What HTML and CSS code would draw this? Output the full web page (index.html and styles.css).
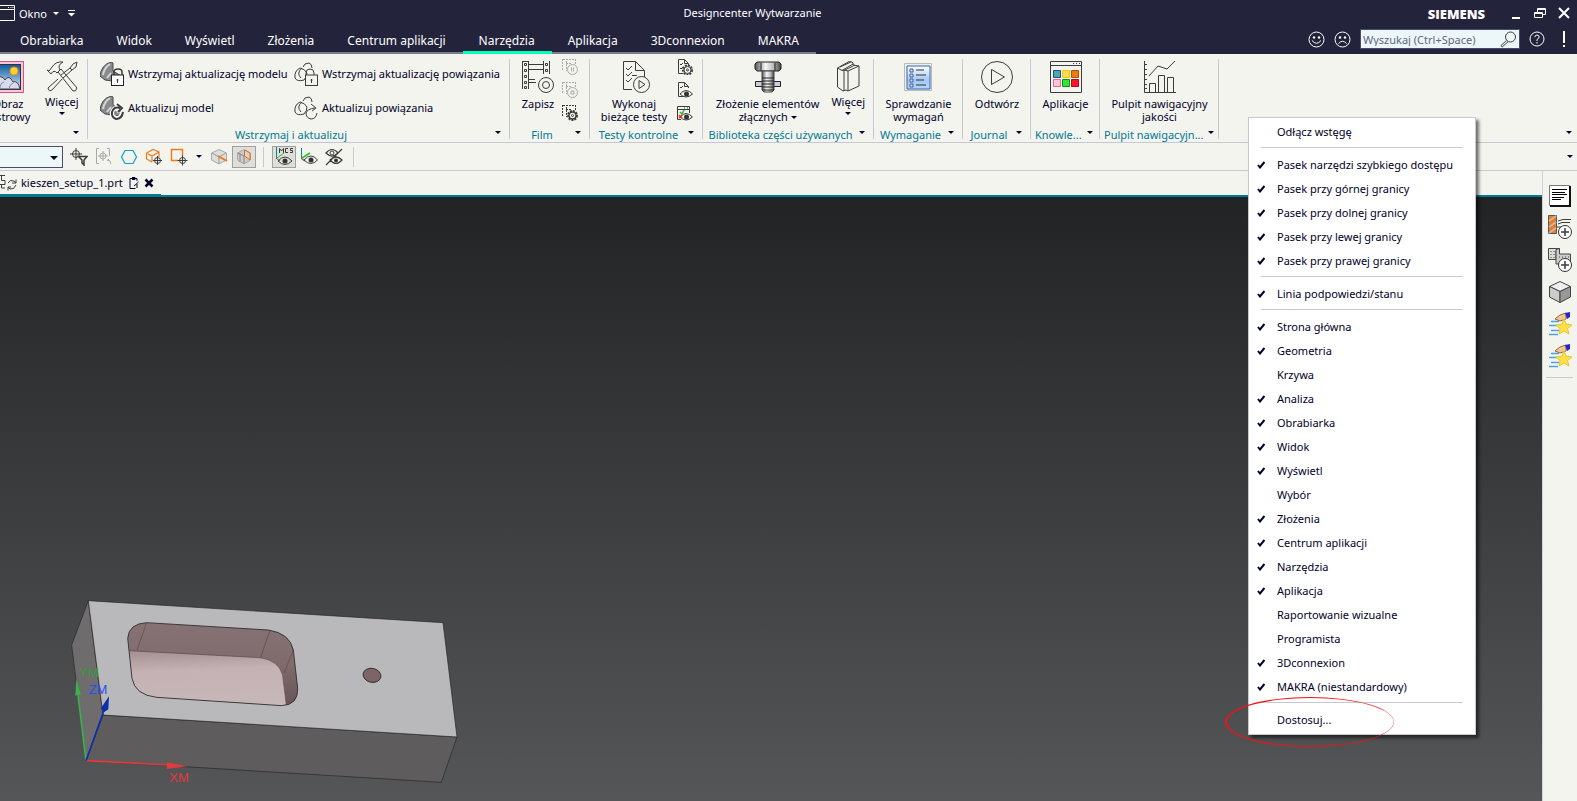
FILE: index.html
```html
<!DOCTYPE html>
<html lang="pl">
<head>
<meta charset="utf-8">
<title>Designcenter Wytwarzanie</title>
<link rel="stylesheet" href="styles.css">
</head>
<body>
<div class="app">
  <header class="titlebar">
    <div class="quick">
      <button class="window-menu"><svg width="16" height="16" viewBox="0 0 16 16"><path d="M-4 .5H14.500V15.500H-4M-4 4.500H14" class="w"/><path d="M8 2.500h1M10.500 2.500h1M12.500 2.500h1" class="w"/></svg><span>Okno</span><i class="caret"></i></button>
      <button class="customize" aria-label="Dostosuj pasek"><svg width="7" height="7" viewBox="0 0 7 7"><path d="M0 .5H7" class="w"/><path d="M0 3h7L3.500 6.500z" fill="#fff"/></svg></button>
    </div>
    <h1>Designcenter Wytwarzanie</h1>
    <div class="window-side">
      <strong class="brand">SIEMENS</strong>
      <button class="win" aria-label="Minimalizuj"><svg width="14" height="14"><path d="M3 12h8" class="w w2"/></svg></button>
      <button class="win" aria-label="Przywróć"><svg width="14" height="14"><path d="M4.500 6V2.500h8v6H10M4 3.500h9M1.500 6.500h8v5h-8zM1 7.500h9" class="w"/></svg></button>
      <button class="win" aria-label="Zamknij"><svg width="14" height="14"><path d="M2 2L12 12M12 2L2 12" class="w w2"/></svg></button>
    </div>
  </header>
  <div class="menubar">
    <nav class="tabs">
      <button>Obrabiarka</button><button>Widok</button><button>Wyświetl</button><button>Złożenia</button><button>Centrum aplikacji</button><button class="active">Narzędzia</button><button>Aplikacja</button><button>3Dconnexion</button><button>MAKRA</button>
    </nav>
    <div class="helpers">
      <button class="face" aria-label="Zadowolony"><svg width="17" height="17"><circle cx="8.500" cy="8.500" r="7.500" class="w"/><circle cx="6" cy="6.500" r="1.200" fill="#fff"/><circle cx="11" cy="6.500" r="1.200" fill="#fff"/><path d="M4 9.500Q8.500 15 13 9.500" class="w"/></svg></button>
      <button class="face" aria-label="Niezadowolony"><svg width="17" height="17"><circle cx="8.500" cy="8.500" r="7.500" class="w"/><circle cx="6" cy="6.500" r="1.200" fill="#fff"/><circle cx="11" cy="6.500" r="1.200" fill="#fff"/><path d="M4.500 12.500Q8.500 8 12.500 12.500" class="w"/></svg></button>
      <label class="search"><input type="text" aria-label="Wyszukaj" placeholder="Wyszukaj (Ctrl+Space)"><svg width="17" height="17" viewBox="0 0 17 17"><circle cx="10.500" cy="6" r="5" class="k"/><path d="M6.500 9.500L1 14.500l1.200 1.500L8 10.800" class="k"/></svg></label>
      <button class="help" aria-label="Pomoc"><svg width="16" height="16"><circle cx="8" cy="8" r="7" class="w"/><path d="M5.800 6.200Q6 4 8 4T10.200 6Q10.200 7.200 8 8.600V10M8 11v1.500" class="w"/></svg></button>
      <button class="alert" aria-label="Alerty"><svg width="8" height="18"><path d="M4 1v12M4 15v2" class="w w2"/></svg></button>
    </div>
  </div>

  <section class="ribbon">
    <div class="group">
      <div class="body first">
        <button class="big raster"><svg width="32" height="32" viewBox="0 0 32 32"><defs><linearGradient id="sky" x2="0" y2="1"><stop stop-color="#0b5a9e"/><stop offset="1" stop-color="#d8eefb"/></linearGradient></defs><rect x=".5" y=".5" width="31" height="31" fill="#f7c6d8" stroke="#d0558a"/><rect x="3.500" y="3.500" width="25" height="25" fill="url(#sky)" stroke="#333"/><circle cx="22" cy="10" r="4" fill="#ffd42e" stroke="#ff8b17"/><path d="M4 28V18q5-5 9 1q4-6 8 2q5-2 7 7z" fill="#dadaee" stroke="#444"/><path d="M8 28q0-6 4-7M17 28q0-4 4-6" stroke="#8886a8" fill="none"/></svg><span>Obraz<br>rastrowy</span></button>
        <button class="big more"><svg width="32" height="32" viewBox="0 0 32 32"><path d="M3 10L6 6Q10 0 17 1Q11 4 14 9L11 12Q8 8 5 13L1 9ZM12 11L15 8L31 27Q30 31 27 30ZM27 3L31 1L30 6L26 9L17 17M26 9L24 7L15 14M16 18L7 28Q3 32 2 27L12 18M27 3L24 7" class="k"/></svg><span>Więcej</span><i class="caret"></i></button>
      </div>
      <div class="foot"><span></span><button aria-label="Opcje grupy"><i class="caret"></i></button></div>
    </div>
    <div class="group">
      <div class="body pairs">
        <button class="row"><svg width="24" height="24" viewBox="0 0 24 24"><path d="M11 0L13 1V9L23 15L19 20L5 18L0 14Q1 3 11 0Z" fill="#888b8d" stroke="#494a4c"/><path d="M3 13Q4 6 10 2M7 16L11 11" fill="none" stroke="#d7d7d7" stroke-width="2"/><path d="M14 13V10q0-3 4-3t4 3v3" class="k" stroke-width="1.500"/><rect x="11.500" y="13" width="12" height="10.500" fill="#fff" stroke="#222"/><path d="M17.500 17v4M16.500 18h2" class="k"/></svg><span>Wstrzymaj aktualizację modelu</span></button>
        <button class="row"><svg width="24" height="24" viewBox="0 0 24 24"><path d="M12 13V11q0-4 4-4t4 4v2M1 16Q0 9 6 6Q11 7 13 11Q13 15 10 18Q3 20 1 16M7 16Q2 11 8 6M9 5Q10 1 15 1Q18 2 18 6" class="k"/><rect x="11.500" y="13" width="12" height="10.500" class="bg"/><path d="M17.500 17v4M16.500 18h2" class="k"/></svg><span>Wstrzymaj aktualizację powiązania</span></button>
        <button class="row"><svg width="24" height="24" viewBox="0 0 24 24"><path d="M11 0L13 1V9L21 14L19 20L5 18L0 14Q1 3 11 0Z" fill="#888b8d" stroke="#494a4c"/><path d="M3 13Q4 6 10 2M7 16L11 11" fill="none" stroke="#d7d7d7" stroke-width="2"/><path d="M22 16Q21 23 16 22Q11 20 12 16Q14 11 20 12M17 7L22 12L17 16" fill="none" stroke="#fff" stroke-width="4"/><path d="M23 16Q22 23 16 23Q11 21 12 16Q14 10 20 12M17 8L22 12L18 16" class="k" stroke-width="2"/></svg><span>Aktualizuj model</span></button>
        <button class="row"><svg width="24" height="24" viewBox="0 0 24 24"><path d="M1 16Q0 9 6 6Q11 7 13 11Q13 15 10 18Q3 20 1 16M7 16Q2 11 8 6M9 5Q10 1 15 1Q18 2 18 6M23 17Q22 23 17 23Q12 22 12 17Q13 13 21 12M17 8L22 12L18 15" class="k"/></svg><span>Aktualizuj powiązania</span></button>
      </div>
      <div class="foot"><span>Wstrzymaj i aktualizuj</span><button aria-label="Opcje grupy"><i class="caret"></i></button></div>
    </div>
    <div class="group">
      <div class="body film">
        <button class="big"><svg width="32" height="32" viewBox="0 0 32 32"><path d="M.5 0V28M6.500 0V28M.5 .5H6.500M21.500 0V13M27.500 0V13M7 3.500H21M7 8.500H21M7 21.500H14M7 18.500H13" class="k"/><path d="M2.500 2.500h2v2h-2zM2.500 8.500h2v2h-2zM2.500 14.500h2v2h-2zM2.500 20.500h2v2h-2zM2.500 25.500h2v2h-2zM23.500 2.500h2v2h-2zM23.500 8.500h2v2h-2z" class="k"/><circle cx="24" cy="24" r="7.500" class="bg"/><circle cx="24" cy="24" r="3.500" class="k"/></svg><span>Zapisz</span></button>
        <div class="stack">
          <button disabled aria-label="Wstrzymaj"><svg width="16" height="16"><path d="M.5 0V12M4.500 2V12M4 4.500H10M13.500 0V6M1 .5H14" class="k" stroke-dasharray="2 1"/><circle cx="10.500" cy="10.500" r="5" class="bg"/><path d="M9.500 8.500v4M11.500 8.500v4" class="k"/></svg></button>
          <button disabled aria-label="Zatrzymaj"><svg width="16" height="16"><path d="M.5 0V12M4.500 2V12M4 4.500H10M13.500 0V6M1 .5H14" class="k" stroke-dasharray="2 1"/><circle cx="10.500" cy="10.500" r="5" class="bg"/><path d="M9 9h3v3h-3z" class="k"/></svg></button>
          <button aria-label="Ustawienia filmu"><svg width="16" height="16"><path d="M.5 0V12M4.500 2V12M4 4.500H10M13.500 0V6M1 .5H14" class="k" stroke-dasharray="2 1"/><circle cx="10.500" cy="10.500" r="4.500" class="bg" stroke-width="2" stroke-dasharray="2 1"/><circle cx="10.500" cy="10.500" r="3.500" class="bg" stroke-width="1.500"/><circle cx="10.500" cy="10.500" r="1" class="k"/></svg></button>
        </div>
      </div>
      <div class="foot"><span>Film</span><button aria-label="Opcje grupy"><i class="caret"></i></button></div>
    </div>
    <div class="group">
      <div class="body tests">
        <button class="big"><svg width="32" height="32" viewBox="0 0 32 32"><path d="M14 28.500H5.500V.5H17.500L26.500 9.500V16M17.500 .5V9.500H26M8 7l2 2 4-4M8 13l2 2 4-4M8 19l2 2 4-4M14 14.500h5" class="k"/><circle cx="23.500" cy="23.500" r="8" class="bg"/><path d="M21 19.500V27.500L27 23.500Z" class="k"/></svg><span>Wykonaj<br>bieżące testy</span></button>
        <div class="stack">
          <button aria-label="Ustawienia testów"><svg width="16" height="16"><path d="M6 14.500H1.500V.5H7.500L11.500 4.500V6M7.500 .5V4.500H11M3 5l1 1 2-2M3 9l1 1 2-2" class="k"/><circle cx="10.500" cy="11" r="4.500" class="bg" stroke-width="2" stroke-dasharray="2 1"/><circle cx="10.500" cy="11" r="3.500" class="bg"/><circle cx="10.500" cy="11" r="1" class="k"/></svg></button>
          <button aria-label="Podgląd testów"><svg width="16" height="16"><path d="M6 14.500H1.500V.5H7.500L11.500 4.500V6M7.500 .5V4.500H11M3 5l1 1 2-2" class="k"/><path d="M3 12Q9 5 15.500 12Q9 18 3 12Z" class="bg"/><circle cx="9.500" cy="12" r="2.500" fill="#333"/></svg></button>
          <button aria-label="Wyniki testów"><svg width="16" height="16"><path d="M4 14.500H.5V1.500H12.500V8M1 4.500H12M7 3h1M10 3h1" class="k"/><path d="M3 12Q9 5 15.500 12Q9 18 3 12Z" class="bg"/><circle cx="9.500" cy="12" r="2.500" fill="#333"/><path d="M3 7l2 2 2-4" fill="none" stroke="#22c32e" stroke-width="1.500"/><path d="M2 10l3 3M5 10l-3 3" stroke="#e8262e" stroke-width="1.500"/></svg></button>
        </div>
      </div>
      <div class="foot"><span>Testy kontrolne</span><button aria-label="Opcje grupy"><i class="caret"></i></button></div>
    </div>
    <div class="group">
      <div class="body library">
        <button class="big"><svg width="32" height="32" viewBox="0 0 32 32"><defs><linearGradient id="steel"><stop stop-color="#555"/><stop offset=".4" stop-color="#f7f7f7"/><stop offset=".7" stop-color="#bbb"/><stop offset="1" stop-color="#444"/></linearGradient></defs><path d="M3 3L5 1H27L29 3V8L27 10H5L3 8Z" fill="url(#steel)" stroke="#222"/><path d="M9 2V10M23 2V10" stroke="#222"/><path d="M3.500 20.500h25v5h-25z" fill="#ccd" stroke="#222"/><path d="M10 10H22V29L20 31H12L10 29Z" fill="url(#steel)" stroke="#444"/><path d="M10 17h12M10 20h12M10 23h12M10 26h12M10 29h12" stroke="#222"/></svg><span>Złożenie elementów<br>złącznych <i class="caret"></i></span></button>
        <button class="big more"><svg width="32" height="32" viewBox="0 0 32 32"><path d="M5.500 7L18 0L21 2V4L27 5V25L16 30L14 29L11 30L5.500 26ZM5.500 7L10 9.500L12 9V30M16 30V10L27 5M10 9.500L21 3M12 9L16 10M13 9L23 4M8 6L19 1" class="k"/></svg><span>Więcej</span><i class="caret"></i></button>
      </div>
      <div class="foot"><span>Biblioteka części używanych</span><button aria-label="Opcje grupy"><i class="caret"></i></button></div>
    </div>
    <div class="group">
      <div class="body">
        <button class="big"><svg width="32" height="32" viewBox="0 0 32 32"><defs><linearGradient id="list" x2="0" y2="1"><stop stop-color="#fff"/><stop offset=".6" stop-color="#a4c8f6"/><stop offset="1" stop-color="#b5d5ff"/></linearGradient></defs><path d="M2.500 2.500h27v27h-27z" fill="#eee" stroke="#bcbbb0"/><path d="M5 5h23v23h-23z" fill="url(#list)" stroke="#3565b3"/><path d="M8 8h3v3h-3zM8 13h3v3h-3zM8 18h3v3h-3zM8 23h3v3h-3z" fill="#fbdf9f" stroke="#3565b3"/><path d="M14 9h8M14 14h10M14 19h8M14 24h10" stroke="#333"/></svg><span>Sprawdzanie<br>wymagań</span></button>
      </div>
      <div class="foot"><span>Wymaganie</span><button aria-label="Opcje grupy"><i class="caret"></i></button></div>
    </div>
    <div class="group">
      <div class="body">
        <button class="big"><svg width="32" height="32" viewBox="0 0 32 32"><circle cx="16" cy="16" r="15.500" class="k"/><path d="M10.500 8.500V23.500L23.500 16Z" class="k"/></svg><span>Odtwórz</span></button>
      </div>
      <div class="foot"><span>Journal</span><button aria-label="Opcje grupy"><i class="caret"></i></button></div>
    </div>
    <div class="group">
      <div class="body">
        <button class="big"><svg width="32" height="32" viewBox="0 0 32 32"><path d="M.5 .5h31v31h-31zM0 4.500h32M23 2.500h1M26 2.500h1M29 2.500h1" class="k"/><path d="M3.500 9.500h7v7h-7z" fill="#5b9fb8" stroke="#00607d"/><path d="M12.500 9.500h7v7h-7z" fill="#ffdc60" stroke="#ffc000"/><path d="M21.500 9.500h7v7h-7z" fill="#ec7a0c" stroke="#a95708"/><path d="M3.500 18.500h7v7h-7z" fill="#f8c6da" stroke="#dd6797"/><path d="M12.500 18.500h7v7h-7z" fill="#2ee838" stroke="#118c18"/><path d="M21.500 18.500h7v7h-7z" fill="#ff142e" stroke="#b8051b"/></svg><span>Aplikacje</span></button>
      </div>
      <div class="foot"><span>Knowle...</span><button aria-label="Opcje grupy"><i class="caret"></i></button></div>
    </div>
    <div class="group">
      <div class="body">
        <button class="big"><svg width="32" height="32" viewBox="0 0 32 32"><path d="M.5 0V31.500H32M1 3.500h2M1 8.500h2M1 13.500h2M1 18.500h2M1 23.500h2M1 27.500h2M5.500 31V22.500H11.500V31M14.500 31V14.500H20.500V31M23.500 31V16.500H29.500V31M5 15L14 5L23 8L31 0" class="k"/></svg><span>Pulpit nawigacyjny<br>jakości</span></button>
      </div>
      <div class="foot"><span>Pulpit nawigacyjn...</span><button aria-label="Opcje grupy"><i class="caret"></i></button></div>
    </div>
    <div class="group rest">
      <div class="foot"><span></span><button aria-label="Opcje wstęgi"><i class="caret"></i></button></div>
    </div>
  </section>

  <section class="toolbar">
    <label class="combo"><select aria-label="Filtr wyboru"><option></option></select><i class="caret"></i></label>
    <button aria-label="Filtr"><svg width="18" height="18"><circle cx="6" cy="6" r="3.500" class="k"/><path d="M6 0v12M0 6h12" class="k"/><path d="M8.500 8.500H17L14 12V17L12 15V12Z" class="bg" stroke-width="1.500"/></svg></button>
    <button disabled aria-label="Zakres"><svg width="18" height="18"><path d="M4 .5H1.500V15.500H4M12 .5H14.500V8M12 12Q16 12 16 16M14 11l-2 2" class="k"/><circle cx="8" cy="8" r="3" class="k"/><path d="M8 3v10M3 8h10" class="k"/></svg></button>
    <button aria-label="Sześciokąt"><svg width="18" height="18"><path d="M5 2.500H13L16.500 9L13 15.500H5L1.500 9Z" fill="none" stroke="#00a5d0" stroke-width="1.200"/></svg></button>
    <button aria-label="Bryła"><svg width="18" height="18"><path d="M1.500 5L8 1.500L14 4V9M1.500 5L7 8L14 4M7 8V14M1.500 5V11L7 14" fill="none" stroke="#ee7a1a" stroke-width="1.200"/><circle cx="12.500" cy="12.500" r="3" class="k"/><path d="M12.500 8v9M8 12.500h9" class="k"/></svg></button>
    <button aria-label="Prostokąt"><svg width="18" height="18"><path d="M8 12.500H1.500V1.500H12.500V8" fill="none" stroke="#ee7a1a" stroke-width="1.400"/><circle cx="12.500" cy="12.500" r="3" class="k"/><path d="M12.500 7.500v10M7.500 12.500h10" class="k"/></svg></button>
    <button class="slim" aria-label="Więcej zaznaczeń"><i class="caret"></i></button>
    <button aria-label="Krawędź"><svg width="18" height="18"><path d="M1.500 5L9 1.500L16.500 5V12L9 16L1.500 12Z" fill="#ddd" stroke="#aaa"/><path d="M2 5L9 9L16 5M9 9V16" stroke="#999" fill="none"/><path d="M8 8L17 13" stroke="#ee7a1a" stroke-width="2"/></svg></button>
    <button class="pressed" aria-label="Ściana"><svg width="18" height="18"><path d="M2.500 5L9 1.500L15.500 5V12L9 16L2.500 12Z" fill="#ccc" stroke="#aaa"/><path d="M5 5V14M2.500 5L9 8M9 8V16" stroke="#888" fill="none"/><path d="M9.500 2L15 5V12L9.500 8Z" fill="#dcd3cd" stroke="#df6b14"/></svg></button>
    <hr>
    <button class="pressed" aria-label="MCS"><svg width="18" height="20"><path d="M1.500 0V12" stroke="#008c9e"/><path d="M2 11L9 6" stroke="#2abd2a"/><path d="M2 12l3 2" stroke="#f22"/><path d="M4.500 6V1.500L6.500 4L8.500 1.500V6M13 1.500H10.500V5.500H13M18 1.500H15.500V3.500H17.500V5.500H15" class="k"/><path d="M3 14Q10 6 17 14Q10 21 3 14Z" class="k"/><circle cx="10" cy="14" r="2.500" fill="#333"/></svg></button>
    <button aria-label="Układ"><svg width="18" height="18"><path d="M1.500 0V11" stroke="#008c9e"/><path d="M2 10L10 5" stroke="#2abd2a" stroke-width="1.500"/><path d="M2 11l3 2" stroke="#f22" stroke-width="1.500"/><path d="M4 12Q11 4 17.500 12Q11 19 4 12Z" class="bg"/><circle cx="11" cy="12" r="2.500" fill="#333"/></svg></button>
    <button aria-label="Odwróć widoczność"><svg width="18" height="18"><path d="M1 5Q7 -2 13 5Q7 11 1 5ZM5 12Q11 6 17 12Q11 19 5 12ZM1 17L17 1" class="k" stroke-width="1.200"/><circle cx="7" cy="5" r="2" class="k"/><circle cx="11" cy="12.500" r="2" fill="#333"/></svg></button>
    <hr>
    <button class="slim end" aria-label="Opcje paska"><i class="caret"></i></button>
  </section>

  <div class="work">
    <div class="main">
      <div class="files">
        <div class="file"><svg width="17" height="18" viewBox="0 0 17 18"><path d="M0 1.500H5M1.500 1.500V6.500H5V10.500H0M1.500 10.500V14H5M8 9Q10 5 14 7L16 9M16 5.500V9H12M16 11Q14 16 10 15L8 13M8 16.500V13H11" class="k"/></svg><span>kieszen_setup_1.prt</span><svg width="10" height="12" viewBox="0 0 10 12"><path d="M6.500 11.500H1V1.500H8V4M3 .5H6V2.500H3M9.500 5L5 9M8 7v4" class="n"/></svg><button aria-label="Zamknij plik"><svg width="10" height="10"><path d="M1.500 1.500L8.500 8.500M8.500 1.500L1.500 8.500" stroke="#000028" stroke-width="2.500"/></svg></button></div>
      </div>
      <main class="viewport">
        <svg class="model" width="420" height="221" viewBox="0 0 1260 663">
          <defs>
            <linearGradient id="floor" x2=".1" y2="1"><stop stop-color="#a28f91"/><stop offset=".35" stop-color="#c4b2b4"/><stop offset="1" stop-color="#c8b8ba"/></linearGradient>
            <linearGradient id="wall" x2="0" y2="1"><stop stop-color="#877275"/><stop offset=".5" stop-color="#806b6d"/><stop offset="1" stop-color="#665154"/></linearGradient>
            <clipPath id="pocket"><path d="M290 128L655 150Q720 160 730 210L743 325Q745 375 695 377L320 352Q255 345 246 295L233 175Q236 131 290 128Z"/></clipPath>
          </defs>
          <g stroke="#262626" stroke-width="2" stroke-linejoin="round">
            <path d="M115 62L65 195L108 542L159 405Z" fill="#6f6c6e"/>
            <path d="M159 405L1221 471L1174 607L108 542Z" fill="#5e5c5d"/>
            <path d="M115 62L1179 128L1221 471L159 405Z" fill="#b9b9bb"/>
          </g>
          <g clip-path="url(#pocket)">
            <path d="M220 110H760V390H220Z" fill="url(#wall)"/>
            <path d="M235 212L630 233Q685 240 698 285L709 375L700 400H220Z" fill="url(#floor)"/>
            <path d="M290 128L261 210M660 150L632 232M732 205L703 278M235 212L630 233Q685 240 698 285L709 375" fill="none" stroke="#5a484a" stroke-width="2"/>
          </g>
          <path d="M290 128L655 150Q720 160 730 210L743 325Q745 375 695 377L320 352Q255 345 246 295L233 175Q236 131 290 128Z" fill="none" stroke="#262626" stroke-width="2.500"/>
          <ellipse cx="966" cy="286" rx="27" ry="21" transform="rotate(12 966 286)" fill="#7c6467" stroke="#262626" stroke-width="2.500"/>
          <g font-family="Liberation Sans, Arial, sans-serif" font-size="39">
            <text x="88" y="291" fill="#2f9f3a">YM</text><text x="116" y="343" fill="#2b50f0">ZM</text><text x="358" y="605" fill="#e03a3a">XM</text>
          </g>
          <path d="M108 542L84 345" stroke="#3cb34a" stroke-width="5"/><path d="M79 297L92 343L76 347Z" fill="#3cb34a"/>
          <path d="M108 542L352 555" stroke="#e03a3a" stroke-width="5"/><path d="M350 547L412 559L351 567Z" fill="#e03a3a"/>
          <path d="M108 542L160 397" stroke="#0c2fb0" stroke-width="5"/><path d="M177 349L175 388L160 398L153 384Z" fill="#0c2fb0"/>
        </svg>
      </main>
    </div>
    <aside class="rail">
      <button aria-label="Tekst"><svg width="22" height="22"><path d="M.5 .5h20v20h-20z" fill="#fff" stroke="#777"/><path d="M21 1V21H1" fill="none" stroke="#111" stroke-width="2"/><path d="M3 4.500h15M3 7.500h13M3 9.500h15M3 12.500h12M3 14.500h9" stroke="#000"/></svg></button>
      <button aria-label="Utwórz narzędzie"><svg width="26" height="26" viewBox="0 0 26 26"><path d="M1.500 1.500h8v18h-8z" fill="#ee7a1a" stroke="#555"/><path d="M2 7L9 2M2 13L9 8M2 19L9 14" stroke="#bbb" stroke-width="2"/><path d="M11 7L16 5.500H24M11 10L15 8.500H23M10 13h5" class="k"/><circle cx="18" cy="18" r="6.500" fill="#fff" stroke="#333"/><path d="M18 14v8M14 18h8" class="k" stroke-width="1.500"/></svg></button>
      <button aria-label="Utwórz geometrię"><svg width="26" height="26" viewBox="0 0 26 26"><path d="M1.500 1.500H12.500L9 4V12.500H1.500Z" fill="#ddd" stroke="#444"/><path d="M9 2.500L12.500 1.500V7H23.500V17H9Z" fill="#ccc" stroke="#444"/><path d="M4 4v8M7 4v8M12 10h10" stroke="#444" stroke-dasharray="1 2"/><circle cx="18" cy="18" r="6.500" fill="#fff" stroke="#333"/><path d="M18 14v8M14 18h8" class="k" stroke-width="1.500"/></svg></button>
      <button aria-label="Bryła"><svg width="24" height="24"><path d="M1.500 6.500L12 1.500L22.500 6.500L12 11.500Z" fill="#eee" stroke="#444"/><path d="M1.500 6.500L12 11.500V22.500L1.500 17Z" fill="#ccc" stroke="#444"/><path d="M22.500 6.500L12 11.500V22.500L22.500 17Z" fill="#999" stroke="#444"/></svg></button>
      <button aria-label="Ulubione 1"><svg width="24" height="24"><path d="M3 9.500h8M1 13.500h9M3 18.500h8M1 22.500h9" stroke="#4ba3e3" stroke-width="1.500"/><path d="M7 7L12 3L18 1V7L12 9Z" fill="#f0c897" stroke="#96683d"/><path d="M17 1L22 0V5L19 7Z" fill="#2525c8"/><path d="M16 7L18 12L24 13L19.500 16.500L21 22L16 19L11 22L12 16.500L8 13L14 12Z" fill="#ffe04a" stroke="#edc52b"/></svg></button>
      <button aria-label="Ulubione 2"><svg width="24" height="24"><path d="M3 9.500h8M1 13.500h9M3 18.500h8M1 22.500h9" stroke="#4ba3e3" stroke-width="1.500"/><path d="M7 7L12 3L18 1V7L12 9Z" fill="#f0c897" stroke="#96683d"/><path d="M17 1L22 0V5L19 7Z" fill="#2525c8"/><path d="M16 7L18 12L24 13L19.500 16.500L21 22L16 19L11 22L12 16.500L8 13L14 12Z" fill="#ffe04a" stroke="#edc52b"/></svg></button>
      <hr>
    </aside>
  </div>

  <div class="context" role="menu">
    <button>Odłącz wstęgę</button>
    <hr>
    <button class="on">Pasek narzędzi szybkiego dostępu</button>
    <button class="on">Pasek przy górnej granicy</button>
    <button class="on">Pasek przy dolnej granicy</button>
    <button class="on">Pasek przy lewej granicy</button>
    <button class="on">Pasek przy prawej granicy</button>
    <hr>
    <button class="on">Linia podpowiedzi/stanu</button>
    <hr>
    <button class="on">Strona główna</button>
    <button class="on">Geometria</button>
    <button>Krzywa</button>
    <button class="on">Analiza</button>
    <button class="on">Obrabiarka</button>
    <button class="on">Widok</button>
    <button class="on">Wyświetl</button>
    <button>Wybór</button>
    <button class="on">Złożenia</button>
    <button class="on">Centrum aplikacji</button>
    <button class="on">Narzędzia</button>
    <button class="on">Aplikacja</button>
    <button>Raportowanie wizualne</button>
    <button>Programista</button>
    <button class="on">3Dconnexion</button>
    <button class="on">MAKRA (niestandardowy)</button>
    <hr>
    <button>Dostosuj...</button>
    <svg class="mark" width="172" height="52" viewBox="0 0 172 52"><path fill-rule="evenodd" fill="#f01414" d="M1 26A84.500 25 0 0 1 170 26A84.500 25 0 0 1 1 26ZM3 26A83.300 24 0 0 0 169.700 26A83.300 24 0 0 0 3 26Z"/></svg>
  </div>
</div>
<script src="menu.js"></script>
</body>
</html>
```

FILE: menu.js
```js
// Adds the tick glyph to every enabled entry of the ribbon context menu.
document.querySelectorAll('.context .on').forEach(function (item) {
  item.setAttribute('role', 'menuitemcheckbox');
  item.setAttribute('aria-checked', 'true');
  item.insertAdjacentHTML('afterbegin',
    '<svg class="tick" width="8" height="8"><path d="M1 4L3 6.500L7.500 1" fill="none" stroke="#000028" stroke-width="2"/></svg>');
});
```

FILE: styles.css
```css
* { box-sizing: border-box; }
body { margin: 0; font: 11px/13px "Noto Sans", "Open Sans", sans-serif; color: #000028; }
button { font: inherit; color: inherit; background: none; border: 0; padding: 0; margin: 0; }
button svg { display: block; flex: none; }
.w { fill: none; stroke: #fff; }
.w2 { stroke-width: 2; }
.k { fill: none; stroke: #3c3c3c; }
.n { fill: none; stroke: #000028; }
.bg { fill: #f3f4ee; stroke: #3c3c3c; }
button[disabled] svg { opacity: .4; }
.caret { display: inline-block; width: 0; height: 0; border: 3px solid transparent; border-top-color: currentColor; border-bottom: 0; }

.app { position: relative; display: flex; flex-direction: column; height: 100vh; overflow: hidden; background: #f3f4ee; }

.titlebar { display: flex; align-items: center; height: 26px; background: #23233c; color: #fff; }
.titlebar h1 { margin: 0; font-size: 11px; line-height: 16px; font-weight: 400; }
.quick { flex: 1 1 0; display: flex; gap: 9px; align-items: center; }
.window-menu { display: flex; align-items: center; gap: 3px; }
.window-menu .caret { margin-left: 3px; }
.window-side { flex: 1 1 72px; display: flex; justify-content: flex-end; align-items: center; gap: 10px; padding-right: 6px; }
.brand { font: 800 13px/16px "Open Sans", "Noto Sans", sans-serif; margin: 2px 14px 0 0; }

.menubar { display: flex; justify-content: space-between; height: 28px; background: #23233c; color: #fff; }
.tabs { display: flex; padding-left: 4px; border-bottom: 2px solid #7d7d8f; }
.tabs button { padding: 3px 17px 0 16px; font-size: 12px; line-height: 23px; height: 26px; }
.tabs .active { height: 28px; padding-bottom: 2px; border-bottom: 3px solid #00ffb9; }
.helpers { display: flex; align-items: center; padding: 0 9px 2px 0; }
.face { margin-right: 9px; }
.search { display: flex; align-items: center; width: 160px; height: 20px; padding-right: 2px; background: #ebf7f8; border: 1px solid #4c4c68; }
.search input { flex: 1; min-width: 0; border: 0; background: none; padding: 0 2px; font: inherit; outline: 0; }
.search input::placeholder { color: #66667e; opacity: 1; }
.help { margin: 0 15px 0 9px; }

.ribbon { display: grid; grid-template-columns: 88px 422px 80px 113px 171px 89px 68px 69px 119px 1fr; height: 89px; border-bottom: 1px solid #c8c8d2; }
.group { display: flex; flex-direction: column; justify-content: space-between; margin: 5px 0 4px; border-right: 1px solid #c8c8d2; min-width: 0; }
.group.rest { border: 0; justify-content: flex-end; }
.group.rest .foot { padding-right: 0; }
.body { display: flex; justify-content: center; height: 66px; padding-left: 1px; }
.big { display: flex; flex-direction: column; align-items: center; padding-top: 2px; white-space: nowrap; }
.big svg { margin-bottom: 4px; }
.big .caret { margin-bottom: 2px; }
.more svg { margin-bottom: 2px; }
.more .caret { margin-top: 4px; }
.foot { display: grid; grid-template-columns: 1fr 16px; padding: 0 3px 0 4px; height: 14px; line-height: 20px; color: #007993; text-align: center; white-space: nowrap; }
.foot button { color: #000028; display: flex; align-items: center; justify-content: center; height: 15px; }
.first { justify-content: flex-start; gap: 12px; }
.raster { width: 50px; margin-left: -18px; }
.pairs { display: grid; grid-template-columns: 194px 1fr; grid-template-rows: 34px 34px; padding-left: 12px; }
.row { display: flex; align-items: center; gap: 4px; text-align: left; white-space: nowrap; padding-bottom: 4px; }
.row span { margin-bottom: 2px; }
.stack { display: flex; flex-direction: column; gap: 7px; }
.film { gap: 8px; }
.tests { gap: 10px; padding-left: 2px; }
.library { gap: 12px; padding-left: 5px; }

.toolbar { display: flex; align-items: center; gap: 1px; height: 28px; border-bottom: 1px solid #c8c8d2; }
.toolbar button { width: 24px; height: 22px; display: flex; align-items: center; justify-content: center; }
.toolbar .slim { width: 14px; }
.toolbar .end { margin-left: auto; }
.toolbar .pressed { background: #dfdfd9; border: 1px solid #a0a0a0; }
.toolbar hr { width: 1px; height: 20px; margin: 0 7px 0 6px; border: 0; background: #c8c8d2; }
.combo { position: relative; width: 63px; height: 22px; margin-right: 3px; }
.combo select { appearance: none; width: 100%; height: 100%; background: #ebf7f8; border: 1px solid #4c4c68; border-left: 0; border-radius: 0; }
.combo .caret { position: absolute; right: 5px; top: 10px; border-width: 4px 4px 0; }

.work { flex: 1; display: flex; min-height: 0; }
.main { flex: 1; display: flex; flex-direction: column; min-width: 0; }
.files { height: 26px; border-bottom: 2px solid #007993; }
.file { display: inline-flex; align-items: center; gap: 6px; height: 25px; padding-right: 7px; border-bottom: 2px solid #007993; vertical-align: top; }
.file svg:first-child { margin-right: -2px; }
.file button svg:first-child { margin: 0 0 0 -1px; }
.viewport { position: relative; flex: 1; overflow: hidden; background: linear-gradient(#212324, #555658); }
.model { position: absolute; left: 50px; bottom: 0; }
.rail { width: 35px; display: flex; flex-direction: column; align-items: center; gap: 7px; padding: 14px 1px 0 0; border-left: 1px solid #d4d4d4; }
.rail button:nth-of-type(n+5) { margin-top: 1px; }
.rail hr { width: 27px; height: 1px; margin: 2px 0; border: 0; background: #c8c8d2; }

.context { position: absolute; top: 117px; right: 101px; width: 228px; padding: 2px 0; background: #fff; border: 1px solid #c8c8d2; box-shadow: 3px 3px 3px #0008; }
.context button { position: relative; display: block; width: 100%; height: 24px; padding: 0 0 2px 28px; text-align: left; }
.context hr { height: 1px; margin: 3px 12px 5px; border: 0; background: #c8c8d2; }
.tick { position: absolute; left: 8px; top: 8px; }
.mark { position: absolute; left: -25px; bottom: -14px; pointer-events: none; }
```
